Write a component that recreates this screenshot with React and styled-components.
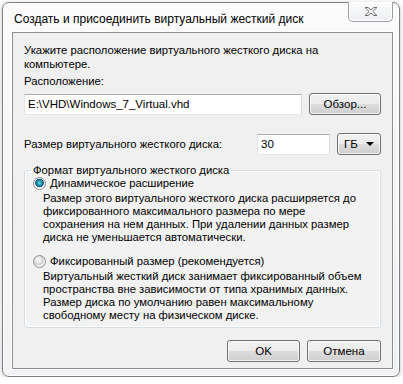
import React from 'react';
import styled, { createGlobalStyle } from 'styled-components';

const GlobalStyle = createGlobalStyle`
    body{
        margin: 0;
        background: #ffffff;
        font-family: 'Liberation Sans', Arial, sans-serif;
        color: #000000;
    }
`;

export default function App(){
    return(
        <>
            <GlobalStyle />
            <Window>
                <TitleBar>
                    <Title>Создать и присоединить виртуальный жесткий диск</Title>
                    <CloseButton>
                        <svg width="14" height="11" viewBox="0 0 14 11">
                            <path d="M1 1.5 L4 1.5 L7 4 L10 1.5 L13 1.5 L8.8 5.5 L13 9.5 L10 9.5 L7 7 L4 9.5 L1 9.5 L5.2 5.5 Z"
                                fill="#ffffff" stroke="#6d6d6d" strokeWidth="1" strokeLinejoin="round" />
                        </svg>
                    </CloseButton>
                </TitleBar>

                <Client>
                    <Text>Укажите расположение виртуального жесткого диска на<br />компьютере.</Text>
                    <Label>Расположение:</Label>
                    <Row>
                        <TextBox grow>E:\VHD\Windows_7_Virtual.vhd</TextBox>
                        <Button width={72}>Обзор...</Button>
                    </Row>

                    <SizeRow>
                        <SizeLabel>Размер виртуального жесткого диска:</SizeLabel>
                        <TextBox width={73}>30</TextBox>
                        <Select>
                            <span>ГБ</span>
                            <Arrow />
                        </Select>
                    </SizeRow>

                    <Group>
                        <Legend>Формат виртуального жесткого диска</Legend>
                        <Option>
                            <Radio checked />
                            <span>Динамическое расширение</span>
                        </Option>
                        <Description>
                            Размер этого виртуального жесткого диска расширяется до<br />
                            фиксированного максимального размера по мере<br />
                            сохранения на нем данных. При удалении данных размер<br />
                            диска не уменьшается автоматически.
                        </Description>
                        <Option spaced>
                            <Radio />
                            <span>Фиксированный размер (рекомендуется)</span>
                        </Option>
                        <Description>
                            Виртуальный жесткий диск занимает фиксированный объем<br />
                            пространства вне зависимости от типа хранимых данных.<br />
                            Размер диска по умолчанию равен максимальному<br />
                            свободному месту на физическом диске.
                        </Description>
                    </Group>

                    <Footer>
                        <Button width={73}>OK</Button>
                        <Button width={74}>Отмена</Button>
                    </Footer>
                </Client>
            </Window>
        </>
    );
}

const Window = styled.div`
    width: 396px;
    margin: 2px 0 0 2px;
    border: 1px solid #7c7f83;
    border-radius: 7px;
    background: linear-gradient(#fbfbfb, #f1f2f3);
    box-shadow: 0 1px 4px rgba(0, 0, 0, 0.25), inset 0 0 0 1px #ffffff;
    display: flex;
    flex-direction: column;
`;

const TitleBar = styled.div`
    height: 29px;
    display: flex;
    justify-content: space-between;
    align-items: flex-start;
    padding: 0 6px 0 11px;
`;

const Title = styled.div`
    margin-top: 8px;
    font-size: 12px;
    line-height: 16px;
    color: #000000;
    white-space: nowrap;
`;

const CloseButton = styled.div`
    width: 43px;
    height: 19px;
    margin-top: -1px;
    border: 1px solid #9a9ea3;
    border-top: none;
    border-radius: 0 0 5px 5px;
    background: linear-gradient(#fdfdfd, #eceef0);
    box-shadow: inset 0 0 0 1px #ffffff;
    display: flex;
    justify-content: center;
    align-items: center;
`;

const Client = styled.div`
    margin: 0 6px 7px 9px;
    border: 1px solid #8d8f92;
    box-shadow: 0 0 0 1px #ffffff;
    background: #f0f0f0;
    padding: 10px 11px 6px 11px;
    font-size: 11.3px;
    white-space: nowrap;
    display: flex;
    flex-direction: column;
`;

const Text = styled.div`
    line-height: 14px;
`;

const Label = styled.div`
    margin-top: 3px;
    line-height: 14px;
`;

const Row = styled.div`
    margin-top: 5px;
    display: flex;
    align-items: center;
    gap: 7px;
`;

const SizeRow = styled.div`
    margin-top: 18px;
    display: flex;
    align-items: center;
    gap: 7px;
`;

const SizeLabel = styled.div`
    flex: 1;
    line-height: 14px;
`;

const TextBox = styled.div`
    ${props => props.grow ? 'flex: 1;' : `width: ${props.width}px;`}
    height: 21px;
    box-sizing: border-box;
    border: 1px solid #abadb3;
    border-left-color: #e2e3ea;
    border-right-color: #dbdfe6;
    border-bottom-color: #e3e9ef;
    background: #ffffff;
    padding: 0 3px;
    display: flex;
    align-items: center;
    font-size: 11.5px;
`;

const Button = styled.div`
    width: ${props => props.width}px;
    height: 22px;
    box-sizing: border-box;
    border: 1px solid #707070;
    border-radius: 3px;
    background: linear-gradient(#f2f2f2 0%, #ebebeb 50%, #dddddd 51%, #cfcfcf 100%);
    box-shadow: inset 0 0 0 1px rgba(255, 255, 255, 0.75);
    display: flex;
    justify-content: center;
    align-items: center;
    font-size: 11.5px;
`;

const Select = styled(Button)`
    width: 44px;
    justify-content: space-between;
    padding: 0 6px 0 6px;
`;

const Arrow = styled.span`
    width: 0;
    height: 0;
    border-left: 4px solid transparent;
    border-right: 4px solid transparent;
    border-top: 4px solid #000000;
`;

const Group = styled.fieldset`
    margin: 8px 0 0 0;
    padding: 0 8px 5px 8px;
    border: 1px solid #d5dfe5;
    border-radius: 3px;
    box-shadow: inset 0 0 0 1px #ffffff;
    background: #f2f2f2;
    min-width: 0;
`;

const Legend = styled.legend`
    padding: 0 2px;
    margin-left: -2px;
    line-height: 14px;
`;

const Option = styled.div`
    margin-top: ${props => props.spaced ? '10px' : '-1px'};
    display: flex;
    align-items: center;
    gap: 4px;
    line-height: 14px;
`;

const Radio = styled.span`
    width: 11px;
    height: 11px;
    border-radius: 50%;
    border: 1px solid #8f8f8f;
    background: ${props => props.checked
        ? 'radial-gradient(circle at 50% 45%, #6ee0d0 0px, #2a9fb0 2px, #155a86 4px, #e8e8e8 4.6px, #ffffff 6px)'
        : 'radial-gradient(circle at 40% 35%, #ffffff 0px, #e6e6e6 3px, #cfcfcf 5px, #f4f4f4 6px)'};
    flex-shrink: 0;
`;

const Description = styled.div`
    margin: 2px 0 0 10px;
    line-height: 13px;
`;

const Footer = styled.div`
    margin-top: 12px;
    display: flex;
    justify-content: flex-end;
    gap: 7px;
`;
